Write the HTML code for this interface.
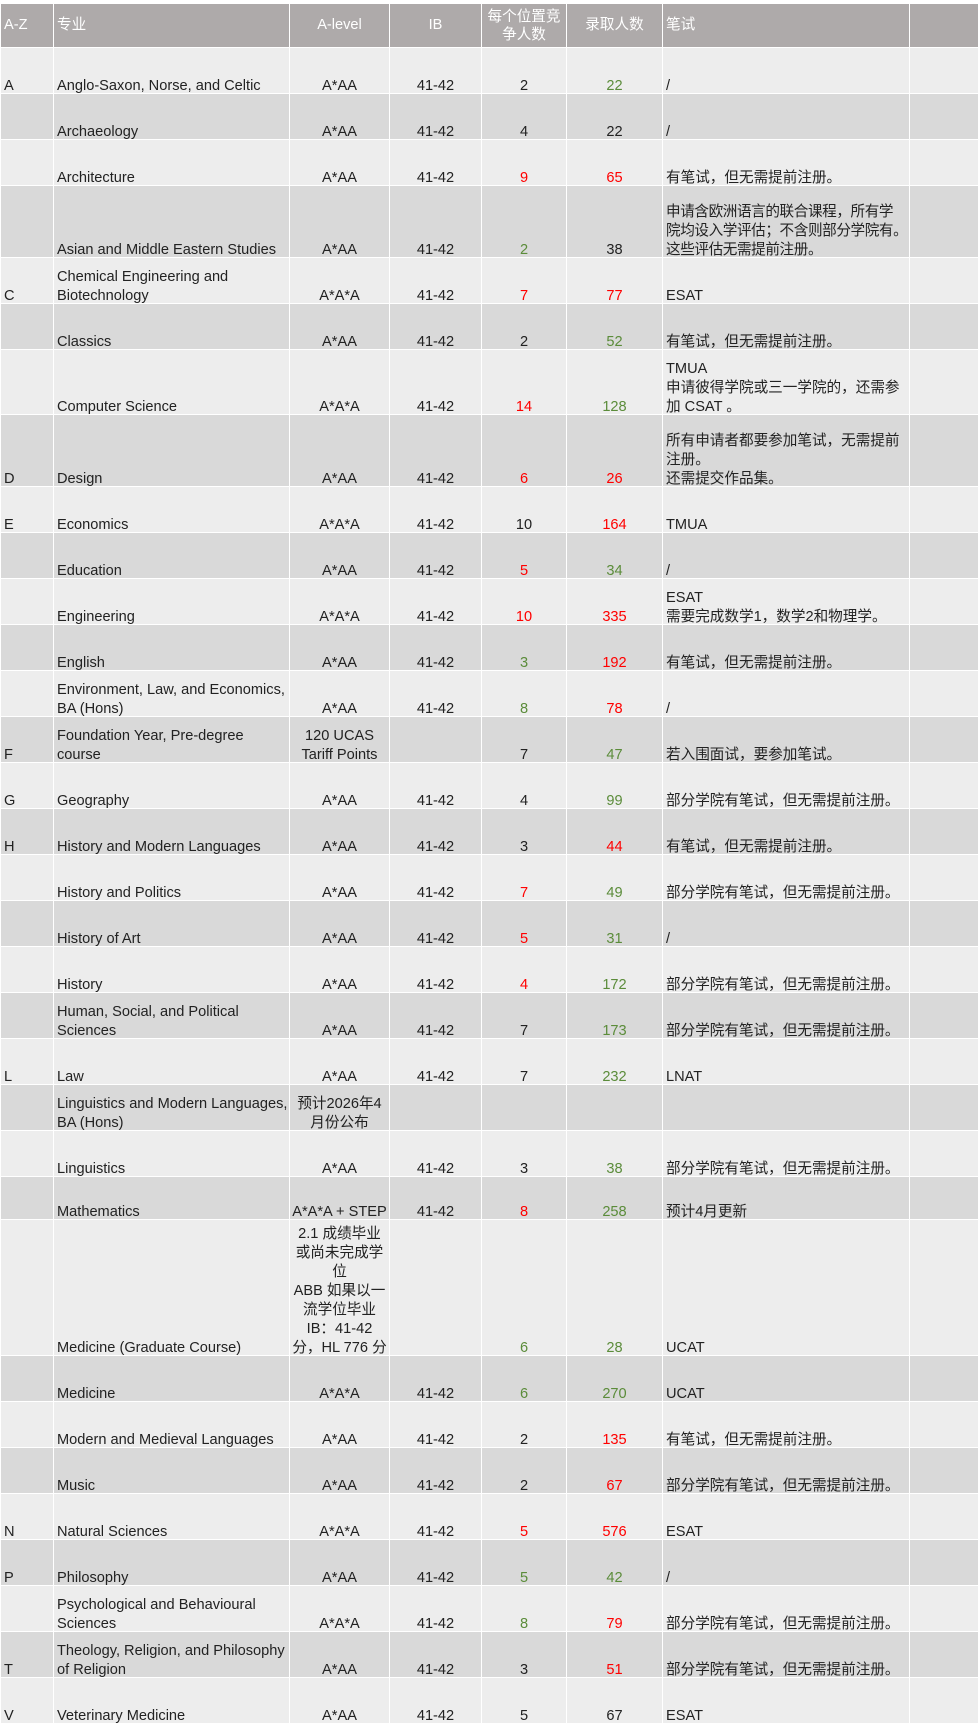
<!DOCTYPE html>
<html><head><meta charset="utf-8">
<style>
html,body{margin:0;padding:0;background:#fff;}
body{padding-top:3px;width:978px;height:1720px;overflow:hidden;}
table{border-collapse:collapse;table-layout:fixed;width:978px;font-family:"Liberation Sans","Noto Sans CJK SC",sans-serif;font-size:14.6px;color:#222;}
td,th{border:1px solid #fff;padding:0 3px 0 3px;vertical-align:bottom;line-height:19px;}
td::after{content:"";display:block;margin-bottom:-3px;height:0;}
th{background:#aeaaaa;color:#fff;font-weight:normal;vertical-align:middle;padding:0 3px;}
tr.l td{background:#ededed;}
tr.d td{background:#d9d9d9;}
.c{text-align:center;}
.g{color:#5b8c3a;}
.r{color:#ff0000;}
tr{height:46px;}
.nw{white-space:nowrap;letter-spacing:-0.4px;}
</style></head><body>
<table>
<colgroup><col style="width:53px"><col style="width:236px"><col style="width:100px"><col style="width:92px"><col style="width:85px"><col style="width:96px"><col style="width:247px"><col style="width:69px"></colgroup>
<tr style="height:44px"><th style="text-align:left">A-Z</th><th style="text-align:left">专业</th><th>A-level</th><th>IB</th><th style="line-height:18px">每个位置竞<br>争人数</th><th>录取人数</th><th style="text-align:left">笔试</th><th></th></tr>
<tr class="l"><td>A</td><td>Anglo-Saxon, Norse, and Celtic</td><td class="c">A*AA</td><td class="c">41-42</td><td class="c">2</td><td class="c g">22</td><td>/</td><td></td></tr>
<tr class="d"><td></td><td>Archaeology</td><td class="c">A*AA</td><td class="c">41-42</td><td class="c">4</td><td class="c">22</td><td>/</td><td></td></tr>
<tr class="l"><td></td><td>Architecture</td><td class="c">A*AA</td><td class="c">41-42</td><td class="c r">9</td><td class="c r">65</td><td>有笔试，但无需提前注册。</td><td></td></tr>
<tr class="d" style="height:72px"><td></td><td>Asian and Middle Eastern Studies</td><td class="c">A*AA</td><td class="c">41-42</td><td class="c g">2</td><td class="c">38</td><td class="nw">申请含欧洲语言的联合课程，所有学<br>院均设入学评估；不含则部分学院有。<br>这些评估无需提前注册。</td><td></td></tr>
<tr class="l"><td>C</td><td>Chemical Engineering and<br>Biotechnology</td><td class="c">A*A*A</td><td class="c">41-42</td><td class="c r">7</td><td class="c r">77</td><td>ESAT</td><td></td></tr>
<tr class="d"><td></td><td>Classics</td><td class="c">A*AA</td><td class="c">41-42</td><td class="c">2</td><td class="c g">52</td><td>有笔试，但无需提前注册。</td><td></td></tr>
<tr class="l" style="height:65px"><td></td><td>Computer Science</td><td class="c">A*A*A</td><td class="c">41-42</td><td class="c r">14</td><td class="c g">128</td><td>TMUA<br>申请彼得学院或三一学院的，还需参<br>加 CSAT 。</td><td></td></tr>
<tr class="d" style="height:72px"><td>D</td><td>Design</td><td class="c">A*AA</td><td class="c">41-42</td><td class="c r">6</td><td class="c r">26</td><td>所有申请者都要参加笔试，无需提前<br>注册。<br>还需提交作品集。</td><td></td></tr>
<tr class="l"><td>E</td><td>Economics</td><td class="c">A*A*A</td><td class="c">41-42</td><td class="c">10</td><td class="c r">164</td><td>TMUA</td><td></td></tr>
<tr class="d"><td></td><td>Education</td><td class="c">A*AA</td><td class="c">41-42</td><td class="c r">5</td><td class="c g">34</td><td>/</td><td></td></tr>
<tr class="l"><td></td><td>Engineering</td><td class="c">A*A*A</td><td class="c">41-42</td><td class="c r">10</td><td class="c r">335</td><td>ESAT<br>需要完成数学1，数学2和物理学。</td><td></td></tr>
<tr class="d"><td></td><td>English</td><td class="c">A*AA</td><td class="c">41-42</td><td class="c g">3</td><td class="c r">192</td><td>有笔试，但无需提前注册。</td><td></td></tr>
<tr class="l"><td></td><td style="white-space:nowrap">Environment, Law, and Economics,<br>BA (Hons)</td><td class="c">A*AA</td><td class="c">41-42</td><td class="c g">8</td><td class="c r">78</td><td>/</td><td></td></tr>
<tr class="d"><td>F</td><td>Foundation Year, Pre-degree<br>course</td><td class="c">120 UCAS<br>Tariff Points</td><td class="c"></td><td class="c">7</td><td class="c g">47</td><td>若入围面试，要参加笔试。</td><td></td></tr>
<tr class="l"><td>G</td><td>Geography</td><td class="c">A*AA</td><td class="c">41-42</td><td class="c">4</td><td class="c g">99</td><td>部分学院有笔试，但无需提前注册。</td><td></td></tr>
<tr class="d"><td>H</td><td>History and Modern Languages</td><td class="c">A*AA</td><td class="c">41-42</td><td class="c">3</td><td class="c r">44</td><td>有笔试，但无需提前注册。</td><td></td></tr>
<tr class="l"><td></td><td>History and Politics</td><td class="c">A*AA</td><td class="c">41-42</td><td class="c r">7</td><td class="c g">49</td><td>部分学院有笔试，但无需提前注册。</td><td></td></tr>
<tr class="d"><td></td><td>History of Art</td><td class="c">A*AA</td><td class="c">41-42</td><td class="c r">5</td><td class="c g">31</td><td>/</td><td></td></tr>
<tr class="l"><td></td><td>History</td><td class="c">A*AA</td><td class="c">41-42</td><td class="c r">4</td><td class="c g">172</td><td>部分学院有笔试，但无需提前注册。</td><td></td></tr>
<tr class="d"><td></td><td>Human, Social, and Political<br>Sciences</td><td class="c">A*AA</td><td class="c">41-42</td><td class="c">7</td><td class="c g">173</td><td>部分学院有笔试，但无需提前注册。</td><td></td></tr>
<tr class="l"><td>L</td><td>Law</td><td class="c">A*AA</td><td class="c">41-42</td><td class="c">7</td><td class="c g">232</td><td>LNAT</td><td></td></tr>
<tr class="d"><td></td><td style="white-space:nowrap">Linguistics and Modern Languages,<br>BA (Hons)</td><td class="c">预计2026年4<br>月份公布</td><td></td><td></td><td></td><td></td><td></td></tr>
<tr class="l"><td></td><td>Linguistics</td><td class="c">A*AA</td><td class="c">41-42</td><td class="c">3</td><td class="c g">38</td><td>部分学院有笔试，但无需提前注册。</td><td></td></tr>
<tr class="d" style="height:43px"><td></td><td>Mathematics</td><td class="c" style="white-space:nowrap;padding:0">A*A*A + STEP</td><td class="c">41-42</td><td class="c r">8</td><td class="c g">258</td><td>预计4月更新</td><td></td></tr>
<tr class="l" style="height:136px"><td></td><td>Medicine (Graduate Course)</td><td class="c" style="padding:0;white-space:nowrap">2.1 成绩毕业<br>或尚未完成学<br>位<br>ABB 如果以一<br>流学位毕业<br>IB：41-42<br>分，HL 776 分</td><td></td><td class="c g">6</td><td class="c g">28</td><td>UCAT</td><td></td></tr>
<tr class="d"><td></td><td>Medicine</td><td class="c">A*A*A</td><td class="c">41-42</td><td class="c g">6</td><td class="c g">270</td><td>UCAT</td><td></td></tr>
<tr class="l"><td></td><td>Modern and Medieval Languages</td><td class="c">A*AA</td><td class="c">41-42</td><td class="c">2</td><td class="c r">135</td><td>有笔试，但无需提前注册。</td><td></td></tr>
<tr class="d"><td></td><td>Music</td><td class="c">A*AA</td><td class="c">41-42</td><td class="c">2</td><td class="c r">67</td><td>部分学院有笔试，但无需提前注册。</td><td></td></tr>
<tr class="l"><td>N</td><td>Natural Sciences</td><td class="c">A*A*A</td><td class="c">41-42</td><td class="c r">5</td><td class="c r">576</td><td>ESAT</td><td></td></tr>
<tr class="d"><td>P</td><td>Philosophy</td><td class="c">A*AA</td><td class="c">41-42</td><td class="c g">5</td><td class="c g">42</td><td>/</td><td></td></tr>
<tr class="l"><td></td><td>Psychological and Behavioural<br>Sciences</td><td class="c">A*A*A</td><td class="c">41-42</td><td class="c g">8</td><td class="c r">79</td><td>部分学院有笔试，但无需提前注册。</td><td></td></tr>
<tr class="d"><td>T</td><td style="white-space:nowrap">Theology, Religion, and Philosophy<br>of Religion</td><td class="c">A*AA</td><td class="c">41-42</td><td class="c">3</td><td class="c r">51</td><td>部分学院有笔试，但无需提前注册。</td><td></td></tr>
<tr class="l"><td>V</td><td>Veterinary Medicine</td><td class="c">A*AA</td><td class="c">41-42</td><td class="c">5</td><td class="c">67</td><td>ESAT</td><td></td></tr>
</table>
</body></html>
